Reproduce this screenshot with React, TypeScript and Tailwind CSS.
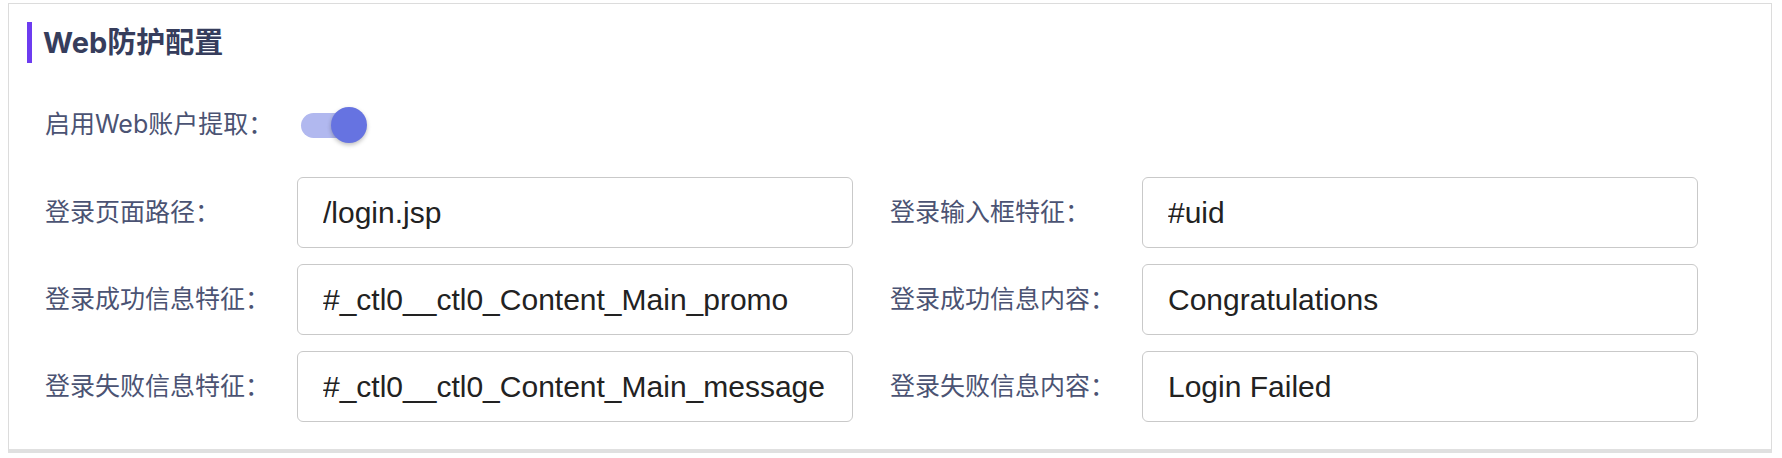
import React, { useState } from "react";

const rows = [
  [
    { label: "登录页面路径：", value: "/login.jsp" },
    { label: "登录输入框特征：", value: "#uid" },
  ],
  [
    { label: "登录成功信息特征：", value: "#_ctl0__ctl0_Content_Main_promo" },
    { label: "登录成功信息内容：", value: "Congratulations" },
  ],
  [
    { label: "登录失败信息特征：", value: "#_ctl0__ctl0_Content_Main_message" },
    { label: "登录失败信息内容：", value: "Login Failed" },
  ],
];

const cjk = { fontFamily: 'Inter, "Noto Sans CJK SC", sans-serif' };
const latin = { fontFamily: '"Liberation Sans", Arial, sans-serif' };

const Field = ({ label, value }: { label: string; value: string }) => (
  <div className="flex items-center">
    <div className="w-[252px] text-[25px] text-[#4b5373] whitespace-nowrap" style={cjk}>
      {label}
    </div>
    <input
      defaultValue={value}
      className="w-[556px] h-[71px] border border-[#c9c9c9] rounded-[6px] px-[25px] text-[30px] text-[#222222] outline-none"
      style={latin}
    />
  </div>
);

const App = () => {
  const [enabled, setEnabled] = useState(true);

  return (
    <div className="min-h-screen bg-white pt-[3px] pl-[8px]">
      <div className="w-[1764px] h-[450px] border border-[#dcdcdc] border-b-4 border-b-[#e0e0e0] bg-white">
        <div className="mt-[18px] ml-[18px] h-[41px] flex items-center border-l-[5px] border-[#6d3cf0] pl-[11px]">
          <h2 className="text-[29px] font-bold text-[#363d5c]" style={cjk}>
            Web防护配置
          </h2>
        </div>

        <div className="mt-[38px] h-[48px] pl-[36px] flex items-center">
          <div className="w-[256px] text-[25px] text-[#4b5373] whitespace-nowrap" style={cjk}>
            启用Web账户提取：
          </div>
          <button
            onClick={() => setEnabled(!enabled)}
            className={`relative w-[61px] h-[25px] rounded-full ${enabled ? "bg-[#b1b8ef]" : "bg-[#cccccc]"}`}
          >
            <span
              className={`absolute top-[-5.5px] w-[36px] h-[36px] rounded-full shadow-[0_2px_4px_rgba(0,0,0,0.25)] ${
                enabled ? "right-[-5px] bg-[#6673e1]" : "left-[-5px] bg-white"
              }`}
            />
          </button>
        </div>

        <div className="mt-[28px] pl-[36px] flex flex-col gap-y-[16px]">
          {rows.map((row, i) => (
            <div key={i} className="flex gap-x-[37px]">
              {row.map((f) => (
                <Field key={f.label} label={f.label} value={f.value} />
              ))}
            </div>
          ))}
        </div>
      </div>
    </div>
  );
};

export default App;
